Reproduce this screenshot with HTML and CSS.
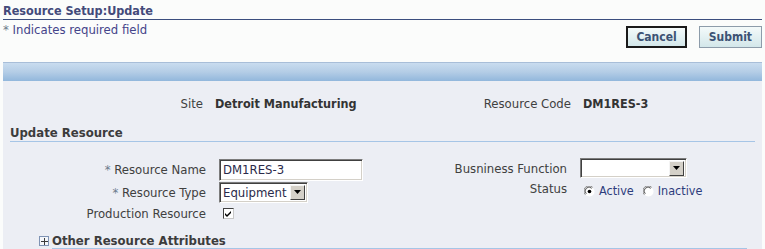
FILE: index.html
```html
<!DOCTYPE html>
<html lang="en">
<head>
    <meta charset="UTF-8">
    <title>Resource Setup:Update</title>
    <link rel="stylesheet" href="styles.css">
</head>
<body>
    <div class="page">
        <h1 class="page-title">Resource Setup:Update</h1>
        <div class="head-row">
            <p class="req-note"><span class="req">*</span> Indicates required field</p>
            <div class="actions">
                <button class="btn btn-default">Cancel</button>
                <button class="btn">Submit</button>
            </div>
        </div>

        <div class="bar"></div>

        <div class="panel">
            <div class="info-row">
                <span class="info-label">Site</span>
                <span class="info-value">Detroit Manufacturing</span>
                <span class="info-label">Resource Code</span>
                <span class="info-value">DM1RES-3</span>
            </div>

            <h2 class="sub-head">Update Resource</h2>

            <div class="form-cols">
                <div class="form-grid left-grid">
                    <label class="f-label"><span class="req">*</span> Resource Name</label>
                    <span class="f-field"><span class="text-input">DM1RES-3</span></span>

                    <label class="f-label"><span class="req">*</span> Resource Type</label>
                    <span class="f-field">
                        <span class="select select-type">
                            <span class="select-val">Equipment</span>
                            <span class="select-btn"><svg width="7" height="4" viewBox="0 0 7 4"><path d="M0 0h7L3.5 4z" fill="#000"/></svg></span>
                        </span>
                    </span>

                    <label class="f-label row-check">Production Resource</label>
                    <span class="f-field row-check">
                        <span class="checkbox"><svg width="9" height="9" viewBox="0 0 9 9"><path d="M1 4l2 2 4-4v2l-4 4-2-2z" fill="#000"/></svg></span>
                    </span>
                </div>

                <div class="form-grid right-grid">
                    <label class="f-label">Busniness Function</label>
                    <span class="f-field">
                        <span class="select select-func">
                            <span class="select-val"></span>
                            <span class="select-btn"><svg width="7" height="4" viewBox="0 0 7 4"><path d="M0 0h7L3.5 4z" fill="#000"/></svg></span>
                        </span>
                    </span>

                    <label class="f-label row-status">Status</label>
                    <span class="f-field radios">
                        <span class="radio-opt">
                            <svg class="radio" width="11" height="11" viewBox="0 0 12 12">
                                <circle cx="6" cy="6" r="5.5" fill="#fff"/>
                                <path d="M1.5 9.5A5 5 0 0 1 9.5 1.5" stroke="#808080" fill="none"/>
                                <path d="M2.5 8.5A3.6 3.6 0 0 1 8.5 2.5" stroke="#404040" fill="none"/>
                                <circle cx="6" cy="6" r="2" fill="#000"/>
                            </svg>Active
                        </span>
                        <span class="radio-opt">
                            <svg class="radio" width="11" height="11" viewBox="0 0 12 12">
                                <circle cx="6" cy="6" r="5.5" fill="#fff"/>
                                <path d="M1.5 9.5A5 5 0 0 1 9.5 1.5" stroke="#808080" fill="none"/>
                                <path d="M2.5 8.5A3.6 3.6 0 0 1 8.5 2.5" stroke="#404040" fill="none"/>
                            </svg>Inactive
                        </span>
                    </span>
                </div>
            </div>

            <h3 class="hide-show">
                <span class="plus-box"><svg width="7" height="7" viewBox="0 0 7 7"><path d="M3 0h1v3h3v1H4v3H3V4H0V3h3z" fill="#3c3c3c"/></svg></span>
                <span class="hide-show-text">Other Resource Attributes</span>
            </h3>
        </div>
    </div>
</body>
</html>
```

FILE: styles.css
```css
:root {
    --page-bg: #fbfcfb;
    --panel-bg: #eceef4;
    --title-color: #434a7a;
    --title-line: #3b4e7e;
    --label-color: #404040;
    --value-color: #333333;
    --sub-line: #a6c5e6;
    --req-color: #6b7b8b;
}

body {
    margin: 0;
    background: var(--page-bg);
    font-family: Tahoma, "DejaVu Sans Condensed", "DejaVu Sans", sans-serif;
    font-size: 13px;
    color: var(--label-color);
}

.page {
    padding: 0 3px;
}

.page-title {
    margin: 0;
    padding-top: 2px;
    font-size: 12.5px;
    line-height: 17px;
    color: var(--title-color);
    border-bottom: 1px solid var(--title-line);
}

.head-row {
    display: flex;
    justify-content: space-between;
    align-items: flex-start;
    height: 42px;
}

.req-note {
    margin: 2px 0 0;
    line-height: 15px;
    color: #44448a;
}

.req {
    color: var(--req-color);
}

.actions {
    display: flex;
    gap: 12px;
    margin-top: 6px;
}

.btn {
    height: 22px;
    padding: 0 9px;
    font-family: inherit;
    font-size: 12px;
    font-weight: bold;
    color: #3c5274;
    background: linear-gradient(#f4fafa, #d3e7ea);
    border: 1px solid #8d9caa;
    border-radius: 0;
}

.btn-default {
    border: 2px solid #1a1a1a;
    padding: 0 8px;
}

.bar {
    height: 18px;
    border-top: 1px solid #a8bed8;
    background: linear-gradient(#c9dcef, #b4cde6 50%, #92b7dc);
}

.panel {
    background: var(--panel-bg);
    padding-top: 15px;
    height: 153px;
}

.info-row {
    display: grid;
    grid-template-columns: 200px 160px 184px auto;
    column-gap: 12px;
    line-height: 16px;
}

.info-label {
    text-align: right;
}

.info-value {
    font-size: 12.5px;
    font-weight: bold;
    color: var(--value-color);
}

.sub-head {
    margin: 12px 7px 0 7px;
    font-size: 13px;
    line-height: 17px;
    color: #3c3c3c;
    border-bottom: 1px solid var(--sub-line);
}

.form-cols {
    display: flex;
    margin-top: 15px;
}

.form-grid {
    display: grid;
    column-gap: 13px;
    align-items: center;
}

.left-grid {
    grid-template-columns: 203px 160px;
    grid-auto-rows: 23px 22px 18px;
    margin-top: 1px;
}

.right-grid {
    grid-template-columns: 188px auto;
    grid-auto-rows: 22px 20px;
}

.f-label {
    text-align: right;
    line-height: 15px;
}

.f-field {
    display: flex;
    align-items: center;
}

.text-input,
.select {
    box-sizing: border-box;
    display: flex;
    align-items: center;
    background: #fff;
    color: #2a2a4a;
    border: 1px solid #fff;
    border-top-color: #7c7c7c;
    border-left-color: #7c7c7c;
    box-shadow: inset 1px 1px 0 #404040, inset -1px -1px 0 #d4d0c8;
}

.text-input {
    width: 144px;
    height: 22px;
    padding-left: 3px;
}

.select {
    height: 21px;
    padding: 0 2px 0 3px;
    justify-content: space-between;
}

.select-type {
    width: 89px;
}

.select-func {
    width: 107px;
    height: 20px;
}

.select-btn {
    box-sizing: border-box;
    width: 15px;
    height: 15px;
    display: flex;
    align-items: center;
    justify-content: center;
    background: #d4d0c8;
    border: 1px solid;
    border-color: #f4f4f4 #404040 #404040 #f4f4f4;
}

.row-check.f-label {
    align-self: end;
}

.row-check.f-field {
    align-self: end;
    padding-left: 4px;
    padding-bottom: 2px;
}

.checkbox {
    box-sizing: border-box;
    width: 11px;
    height: 11px;
    display: flex;
    align-items: center;
    justify-content: center;
    background: #fff;
    border-top: 1px solid #404040;
    border-left: 1px solid #404040;
    border-right: 1px solid #c8c8c8;
    border-bottom: 1px solid #c8c8c8;
}

.row-status {
    align-self: start;
    padding-top: 2px;
}

.radios {
    align-self: start;
    padding-top: 5px;
    padding-left: 4px;
    gap: 9px;
}

.radio-opt {
    display: flex;
    align-items: center;
    gap: 4px;
    font-size: 12.5px;
    line-height: 14px;
    color: #2c3c7c;
}

.hide-show {
    display: flex;
    align-items: center;
    margin: 12px 15px 0 36px;
    font-size: 13px;
}

.plus-box {
    box-sizing: border-box;
    width: 10px;
    height: 10px;
    display: flex;
    align-items: center;
    justify-content: center;
    border: 1px solid #7f93b4;
    background: #f4f6fa;
    margin-right: 3px;
}

.hide-show-text {
    flex: 1;
    line-height: 15px;
    color: #3c3c3c;
    border-bottom: 1px solid var(--sub-line);
}
```
